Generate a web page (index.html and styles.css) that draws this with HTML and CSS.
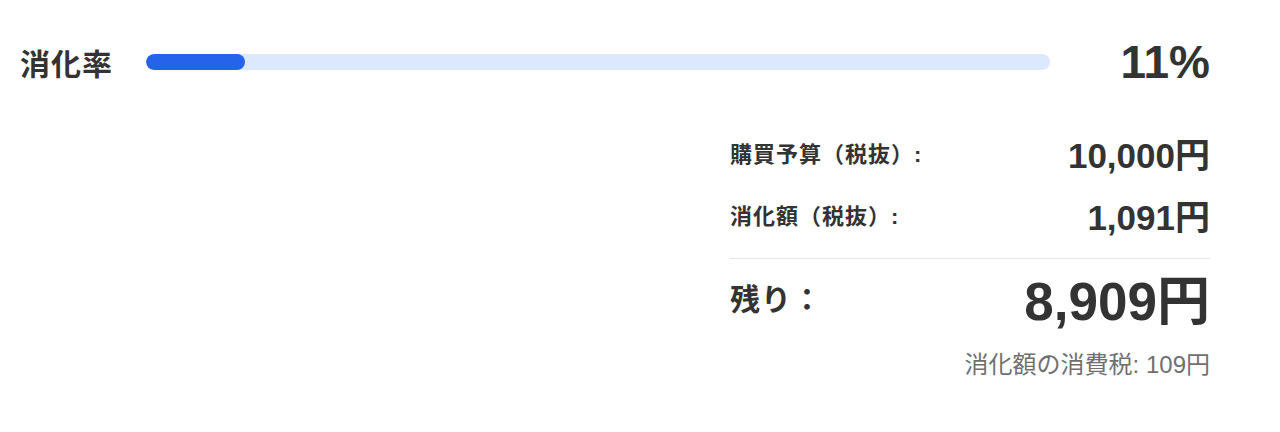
FILE: index.html
```html
<!DOCTYPE html>
<html lang="ja">
<head>
    <meta charset="UTF-8">
    <title>消化率</title>
    <link rel="stylesheet" href="styles.css">
</head>
<body>
    <div class="card">
        <div class="rate-row">
            <span class="rate-label">消化率</span>
            <div class="track">
                <div class="fill" style="width: 11%"></div>
            </div>
            <span class="rate-value">11%</span>
        </div>

        <div class="summary">
            <div class="line">
                <span class="key">購買予算（税抜）:</span>
                <span class="val">10,000円</span>
            </div>
            <div class="line">
                <span class="key">消化額（税抜）:</span>
                <span class="val">1,091円</span>
            </div>
            <div class="line total">
                <span class="key">残り：</span>
                <span class="val">8,909円</span>
            </div>
            <p class="tax">消化額の消費税: 109円</p>
        </div>
    </div>
</body>
</html>
```

FILE: styles.css
```css
body {
    margin: 0;
    background-color: #fff;
    font-family: "Liberation Sans", "Noto Sans CJK JP", sans-serif;
    color: #333;
}
.card {
    padding: 30px 70px 20px 20px;
}
.rate-row {
    display: flex;
    align-items: center;
    height: 64px;
}
.rate-label {
    font-size: 30px;
    font-weight: bold;
    letter-spacing: 1px;
    width: 126px;
}
.track {
    flex: 1;
    height: 16px;
    background-color: #dce8fe;
    border-radius: 8px;
    overflow: hidden;
}
.fill {
    height: 100%;
    background-color: #2563eb;
    border-radius: 8px;
}
.rate-value {
    width: 160px;
    text-align: right;
    font-size: 46px;
    font-weight: bold;
}
.summary {
    width: 480px;
    margin-left: auto;
    margin-top: 27px;
}
.line {
    display: flex;
    justify-content: space-between;
    align-items: center;
    height: 62px;
}
.key {
    font-size: 22px;
    font-weight: bold;
    letter-spacing: 1px;
}
.val {
    font-size: 35px;
    font-weight: bold;
}
.total {
    margin-top: 13px;
    border-top: 1px solid #e5e5e5;
    height: 76px;
}
.total .key {
    font-size: 30px;
}
.total .val {
    font-size: 53px;
}
.tax {
    margin: 10px 0 0;
    text-align: right;
    font-size: 24px;
    color: #707070;
}
```
